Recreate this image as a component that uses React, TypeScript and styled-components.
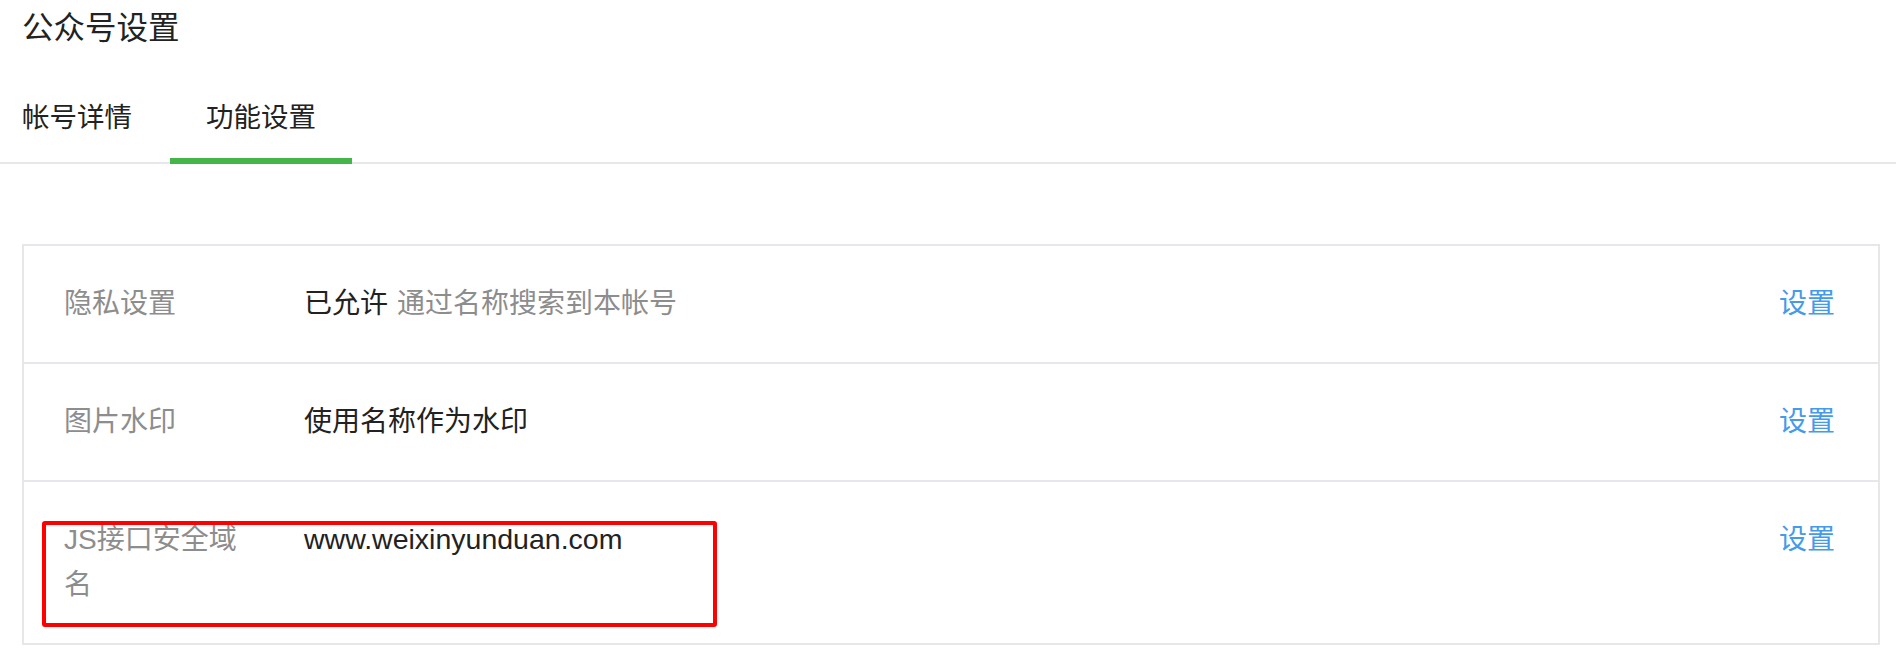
import React, { useState } from 'react';
import styled, { createGlobalStyle } from 'styled-components';

const GlobalStyle = createGlobalStyle`
  body {
    margin: 0;
    background: #fff;
    font-family: "Liberation Sans", "Noto Sans CJK SC", sans-serif;
    color: #222;
  }
`;

const Page = styled.div`
  width: 1896px;
  min-height: 666px;
  background: #fff;
`;

const Title = styled.h2`
  margin: 0;
  padding: 5px 0 0 22px;
  font-size: 31.5px;
  line-height: 46px;
  font-weight: normal;
  color: #222;
`;

const TabBar = styled.div`
  display: flex;
  margin-top: 42px;
  padding-left: 22px;
  border-bottom: 2px solid #e7e7eb;
`;

const Tab = styled.div<{ active: boolean }>`
  padding: 0 36px 15px;
  margin-bottom: -2px;
  font-size: 27.5px;
  line-height: 50px;
  color: #222;
  cursor: pointer;
  border-bottom: 6px solid ${props => props.active ? '#44b549' : 'transparent'};

  &:first-child {
    padding-left: 0;
    margin-right: 2px;
    border-bottom-color: transparent;
  }
`;

const Card = styled.div`
  margin: 80px 16px 0 22px;
  border: 2px solid #e7e7eb;
`;

const Row = styled.div`
  position: relative;
  display: flex;
  align-items: flex-start;
  padding: 35px 43px 36px 40px;
  font-size: 28px;
  line-height: 45px;

  & + & {
    border-top: 2px solid #e7e7eb;
  }
`;

const Label = styled.div`
  flex: 0 0 180px;
  margin-right: 60px;
  color: #8d8d8d;
`;

const Value = styled.div<{ url?: boolean }>`
  flex: 1;
  color: #222;
  font-size: ${props => props.url ? '28.5px' : '28px'};
`;

const Desc = styled.span`
  margin-left: 9px;
  color: #8d8d8d;
`;

const Link = styled.a`
  color: #459ae9;
  text-decoration: none;
  cursor: pointer;
`;

const Highlight = styled.div`
  position: absolute;
  left: 18px;
  top: 39px;
  width: 675px;
  height: 106px;
  box-sizing: border-box;
  border: 4px solid #ff0000;
  border-radius: 3px;
  pointer-events: none;
`;

const tabs = ['帐号详情', '功能设置'];

export default function App(): React.ReactElement {
  const [active, setActive] = useState<number>(1);

  return (
    <Page>
      <GlobalStyle />
      <Title>公众号设置</Title>
      <TabBar>
        {tabs.map((t, i) => (
          <Tab key={t} active={active === i} onClick={() => setActive(i)}>
            {t}
          </Tab>
        ))}
      </TabBar>
      <Card>
        <Row>
          <Label>隐私设置</Label>
          <Value>
            已允许<Desc>通过名称搜索到本帐号</Desc>
          </Value>
          <Link>设置</Link>
        </Row>
        <Row>
          <Label>图片水印</Label>
          <Value>使用名称作为水印</Value>
          <Link>设置</Link>
        </Row>
        <Row>
          <Label>JS接口安全域名</Label>
          <Value url>www.weixinyunduan.com</Value>
          <Link>设置</Link>
          <Highlight />
        </Row>
      </Card>
    </Page>
  );
}
